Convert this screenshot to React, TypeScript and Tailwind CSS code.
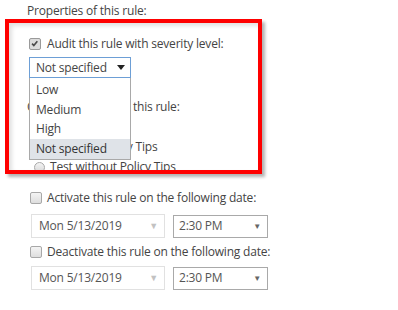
import React from "react";

function Check({ checked = false }: { checked?: boolean }) {
  return (
    <span
      className={`relative inline-block w-[12px] h-[12px] rounded-[2px] border ${
        checked ? "border-[#9a9a9a] bg-[#dcdcdc]" : "border-[#a8a8a8] bg-gradient-to-b from-[#f4f4f4] to-[#dedede]"
      } shrink-0`}
    >
      {checked && (
        <svg viewBox="0 0 12 12" className="absolute left-0 top-0 w-[10px] h-[10px]">
          <path d="M2.5 5.5 L4.6 7.8 L8.8 2.6" fill="none" stroke="#4a4a4a" strokeWidth="2" />
        </svg>
      )}
    </span>
  );
}

function Radio() {
  return (
    <span className="inline-block w-[11px] h-[11px] rounded-full border border-[#a8a8a8] bg-gradient-to-b from-[#f4f4f4] to-[#d8d8d8] shrink-0" />
  );
}

function DateRow() {
  return (
    <div className="flex items-center gap-[8px] ml-[31px]">
      <div className="w-[134px] h-[24px] border border-[#e1e1e1] flex items-center justify-between pl-[7px] pr-[6px] text-[#555]">
        <span>Mon 5/13/2019</span>
        <span className="text-[#c2c2c2] text-[9px]">▼</span>
      </div>
      <div className="w-[95px] h-[23px] border border-[#a9a9a9] flex items-center justify-between pl-[5px] pr-[6px] text-[#555]">
        <span>2:30 PM</span>
        <span className="text-[#666] text-[8px]">▼</span>
      </div>
    </div>
  );
}

export default function App() {
  return (
    <div className="relative w-[398px] h-[310px] overflow-hidden bg-white text-[#444] text-[12px] tracking-[-0.2px] leading-[16px] font-['Open_Sans',sans-serif]">
      <p className="pl-[27px] pt-[3px] h-[30px]">Properties of this rule:</p>

      <div className="flex items-center gap-[6px] ml-[29px] h-[24px] pt-[4px]">
        <Check checked />
        <span>Audit this rule with severity level:</span>
      </div>

      <div className="ml-[29px] mt-[3px] w-[102px] h-[21px] border border-[#6d9fd6] flex items-center justify-between pl-[6px] pr-[5px] text-[#444]">
        <span>Not specified</span>
        <svg viewBox="0 0 8 5" className="w-[8px] h-[5px]">
          <path d="M0 0 H8 L4 5 Z" fill="#222" />
        </svg>
      </div>

      <p className="pl-[27px] mt-[21px]">Choose a mode for this rule:</p>
      <div className="ml-[34px] mt-[2px] flex flex-col">
        <div className="flex items-center gap-[5px] h-[20px]">
          <Radio />
          <span>Enforce</span>
        </div>
        <div className="flex items-center gap-[5px] h-[20px]">
          <Radio />
          <span>Test with Policy Tips</span>
        </div>
        <div className="flex items-center gap-[5px] h-[20px]">
          <Radio />
          <span>Test without Policy Tips</span>
        </div>
      </div>

      <div className="flex items-center gap-[5px] ml-[30px] mt-[13px] h-[16px]">
        <Check />
        <span>Activate this rule on the following date:</span>
      </div>
      <div className="mt-[8px]">
        <DateRow />
      </div>
      <div className="flex items-center gap-[5px] ml-[30px] mt-[6px] h-[16px]">
        <Check />
        <span>Deactivate this rule on the following date:</span>
      </div>
      <div className="mt-[6px]">
        <DateRow />
      </div>
      <div className="flex items-center gap-[5px] ml-[27px] mt-[18px] h-[16px]">
        <Check />
        <span>Stop processing more rules</span>
      </div>

      {/* open severity list */}
      <div className="absolute left-[29px] top-[78px] w-[102px] h-[82px] bg-white border border-[#a9a9a9] border-t-0 pt-[2px] flex flex-col">
        <div className="h-[20px] flex items-center pl-[6px]">Low</div>
        <div className="h-[20px] flex items-center pl-[6px]">Medium</div>
        <div className="h-[20px] flex items-center pl-[6px]">High</div>
        <div className="h-[20px] flex items-center pl-[6px] bg-[#dfe3e8] text-[#333]">Not specified</div>
      </div>

      {/* highlight box */}
      <div className="absolute left-[5px] top-[19px] w-[257px] h-[155px] border-[4px] border-[#ff0000] shadow-[3px_3px_3px_rgba(0,0,0,0.3),inset_3px_3px_4px_rgba(0,0,0,0.12)] pointer-events-none" />
    </div>
  );
}
